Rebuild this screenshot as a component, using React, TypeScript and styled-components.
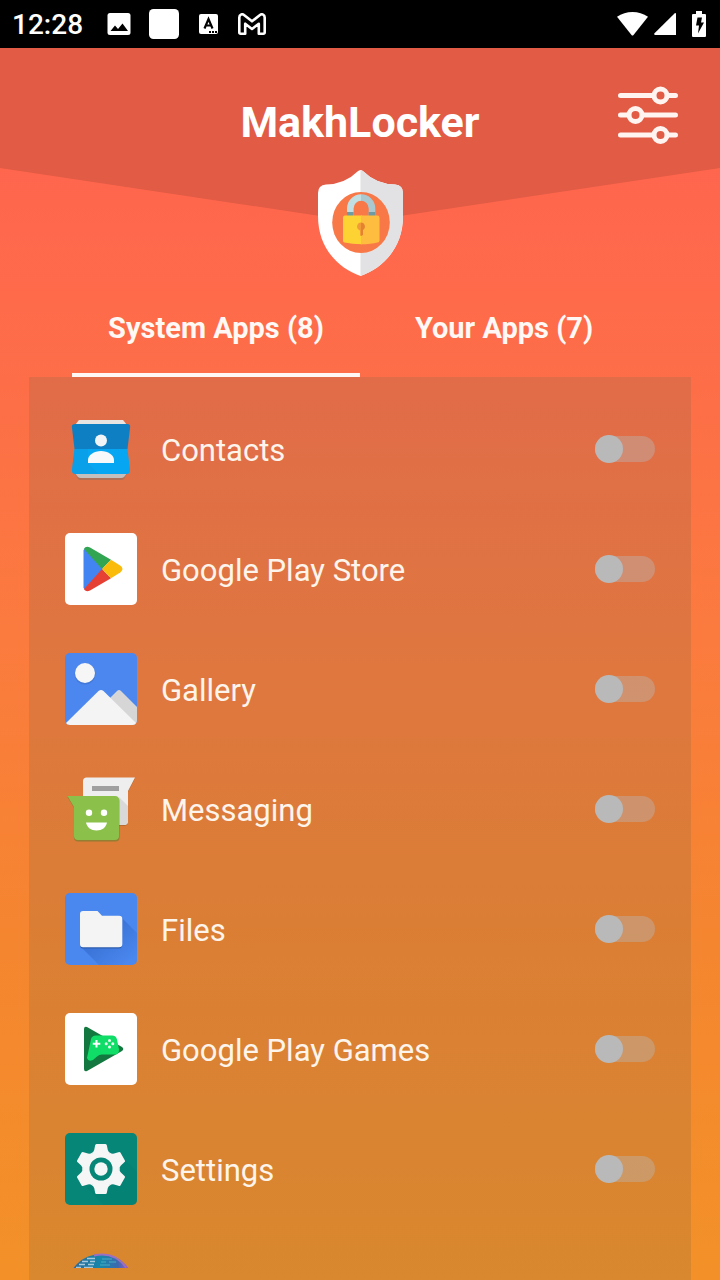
import React, { useState } from "react";
import styled, { createGlobalStyle } from "styled-components";

const GlobalStyle = createGlobalStyle`
  * { box-sizing: border-box; }
  body { margin: 0; font-family: Roboto, "Noto Sans", sans-serif; color: #fff; }
  h1, ul { margin: 0; padding: 0; }
`;

const Screen = styled.div`
  display: flex;
  flex-direction: column;
  height: 100vh;
  background: linear-gradient(#ff624f 0%, #ff674d 16%, #fd6e48 30%, #fb7b3e 50%, #f58530 72%, #f39128 100%);
`;

const StatusBar = styled.div`
  flex: none;
  display: flex;
  align-items: center;
  justify-content: space-between;
  height: 48px;
  padding: 0 14px 0 12px;
  background: #000;
`;

const StatusGroup = styled.div<{ $gap: number }>`
  display: flex;
  align-items: center;
  gap: ${(p) => p.$gap}px;
`;

const Clock = styled.time`
  font-size: 28px;
  font-weight: 500;
  line-height: 32px;
  margin-right: 6px;
  padding-top: 2px;
`;

const Header = styled.header`
  position: relative;
  flex: none;
  display: flex;
  flex-direction: column;
  align-items: center;
  gap: 24px;
  padding: 38px 42px 5px;
`;

const Fold = styled.svg`
  position: absolute;
  top: 0;
  left: 0;
  width: 100%;
  height: 174px;
`;

const TitleRow = styled.div`
  position: relative;
  display: grid;
  grid-template-columns: 1fr auto 1fr;
  align-self: stretch;
  height: 60px;
`;

const Title = styled.h1`
  grid-column: 2;
  align-self: end;
  font-size: 43px;
  font-weight: 700;
  line-height: 48px;
`;

const IconButton = styled.button`
  justify-self: end;
  align-self: start;
  display: flex;
  padding: 0;
  border: 0;
  background: none;
  cursor: pointer;
`;

const Shield = styled.svg`
  position: relative;
  display: block;
`;

const Tabs = styled.div`
  flex: none;
  display: flex;
  margin: 0 10%;
`;

const Tab = styled.button<{ $active: boolean }>`
  flex: 1;
  height: 96px;
  padding: 2px 0 0;
  border: 0;
  border-bottom: 4px solid ${(p) => (p.$active ? "#fff8f4" : "transparent")};
  background: none;
  color: #fff8f4;
  font: 700 29px/32px Roboto, "Noto Sans", sans-serif;
  cursor: pointer;
`;

const Panel = styled.main`
  flex: 1;
  min-height: 0;
  display: flex;
  margin: 0 29px;
  padding: 12px 0;
  background: rgba(115, 100, 75, 0.2);
`;

const AppList = styled.ul`
  flex: 1;
  overflow: hidden;
  list-style: none;
`;

const AppRow = styled.li`
  display: flex;
  align-items: center;
  gap: 24px;
  height: 120px;
  padding: 0 36px;
`;

const AppIcon = styled.svg`
  flex: none;
  width: 72px;
  height: 72px;
`;

const AppName = styled.label`
  flex: 1;
  padding-top: 4px;
  color: #fdf5ec;
  font-size: 31px;
  line-height: 36px;
`;

const Switch = styled.input`
  appearance: none;
  flex: none;
  display: flex;
  align-items: center;
  width: 60px;
  height: 26px;
  margin: 0;
  border-radius: 13px;
  background: rgba(185, 185, 185, 0.4);
  cursor: pointer;

  &::before {
    content: "";
    flex: none;
    width: 28px;
    height: 28px;
    border-radius: 50%;
    background: #b9b9b9;
  }

  &:checked {
    justify-content: flex-end;
  }

  &:checked::before {
    background: #fff;
  }
`;

const contacts = (
  <>
    <path d="M14 7h44l4 5H10z" fill="#e8e4e2" />
    <path d="M9 59h54l-4 7q-1 1-3 1H16q-2 0-3-1z" fill="#8d7062" opacity=".6" />
    <path d="M9 59h54l-4 5q-1 1-3 1H16q-2 0-3-1z" fill="#c4bfbd" />
    <path d="M10 11h52q4 0 3 4l-2.500 21h-53L7 15q-1-4 3-4z" fill="#0e7fc2" />
    <path d="M9.500 36h53L65 57q0 4-3 4H10q-3 0-3-4z" fill="#06a6f2" />
    <path d="M9.500 36H23v14l11 11H10q-3 0-3-4z" fill="#0c9be2" opacity=".6" />
    <circle cx="36" cy="27.500" r="6" fill="#f1f4f6" />
    <path d="M23 50v-3c0-5 6-9 13-9s13 4 13 9v3z" fill="#f6f8f9" />
  </>
);

const playStore = (
  <>
    <rect width="72" height="72" rx="5" fill="#fff" />
    <path d="M18.500 17v38l2 2L38 36 20.500 15z" fill="#4384f3" />
    <path d="M19 16c1-2 3-3 6-1.500l21 12.300L37 36z" fill="#31a552" />
    <path d="M19 56c1 2 3 3 6 1.500l21-12.300L37 36z" fill="#e54033" />
    <path d="M46 26.800l9.500 6q4 3.200 0 6.400l-9.500 6L37 36z" fill="#fbbb0a" />
  </>
);

const gallery = (
  <>
    <rect width="72" height="72" rx="5" fill="#4b87ef" />
    <circle cx="20" cy="21" r="10.500" fill="#3d6fc8" opacity=".6" />
    <circle cx="20" cy="20" r="10" fill="#f6f6f6" />
    <path d="M40 50 52 38q2-2 4 0l16 16v13q0 5-5 5z" fill="#d6d6d6" />
    <path d="M1 70 33.500 38q2.500-2 5 0L71 70q-1.500 2-4 2H5q-3 0-4-2z" fill="#f4f4f4" />
  </>
);

const messaging = (
  <>
    <path d="M21 5.500h49L63 19v30q0 4-4 4H22q-4 0-4-4V9q0-3 3-3.500z" fill="#7c552d" opacity=".4" />
    <path d="M21 4.500h49L63 18v30q0 4-4 4H22q-4 0-4-4V8q0-3 3-3.500z" fill="#eeeeee" />
    <path d="M54 24 63 33v15q0 4-4 4h-5z" fill="#d9d9d9" />
    <path d="M27 13h27v5H27z" fill="#9f9f9f" />
    <path d="M2.500 24H50q4.500 0 4.500 4v36q0 4.500-4 4.500H13q-4 0-4-4V35z" fill="#63812f" opacity=".6" />
    <path d="M2.500 23H50q4 0 4 4v36q0 4-4 4H13q-4 0-4-4V34z" fill="#8bc04b" />
    <circle cx="24" cy="39.700" r="3.200" fill="#fff" />
    <circle cx="39" cy="39.700" r="3.200" fill="#fff" />
    <path d="M21 49.500h21c-1 5-5 8-10.500 8S22 54.500 21 49.500z" fill="#fff" />
  </>
);

const files = (
  <>
    <defs>
      <linearGradient id="files-shade" x1="0" y1="0" x2="1" y2="1">
        <stop offset=".3" stopColor="#2c62c4" stopOpacity=".6" />
        <stop offset=".9" stopColor="#2c62c4" stopOpacity="0" />
      </linearGradient>
    </defs>
    <rect width="72" height="72" rx="5" fill="#4a87ee" />
    <path d="M16 54 34 72h33q5 0 5-5V40L57 25z" fill="url(#files-shade)" />
    <path d="M15 52q0 3.500 3 3.500h36q3 0 3-3.500" fill="#2c5cae" />
    <path d="M18 18h14.500l4.500 4.700h17q3.300 0 3.300 3.300v25q0 3.300-3.300 3.300H18q-3 0-3-3.300V21q0-3 3-3z" fill="#f4f4f4" />
  </>
);

const playGames = (
  <>
    <rect width="72" height="72" rx="5" fill="#fff" />
    <path d="M19 16q0-3 3-2l35 20q2.500 2 0 4L22 58q-3 1-3-2z" fill="#12783f" />
    <path d="M26 26q1-3.500 5-3.500h16q4 0 5 4l2 10q0 5-4 5H37q-3 0-5 2l-4 3.500q-5 2-6-2z" fill="#10dd68" />
    <path d="M31.500 27v7.500M27.800 30.700h7.500" stroke="#fff" strokeWidth="2" />
    <g fill="#e7ffef">
      <circle cx="44.500" cy="27.500" r="1.500" />
      <circle cx="44.500" cy="34" r="1.500" />
      <circle cx="41.200" cy="30.700" r="1.500" />
      <circle cx="47.800" cy="30.700" r="1.500" />
    </g>
  </>
);

const settings = (
  <>
    <rect width="72" height="72" rx="5" fill="#058677" />
    <path d="M22 55 39 72h28q5 0 5-5V39L55 22z" fill="#047b6d" opacity=".3" />
    <g fill="#f5f6f6">
      <circle cx="36" cy="36" r="18" />
      {[0, 60, 120, 180, 240, 300].map((angle) => (
        <path
          key={angle}
          transform={`rotate(${angle} 36 36)`}
          d="M31.500 11h9q1.200 0 1.400 1.500l.9 4.500q.5 2 3.200 3.500H26q2.700-1.500 3.200-3.500l.9-4.500q.2-1.500 1.400-1.500z"
        />
      ))}
    </g>
    <circle cx="36" cy="36" r="11.500" fill="#058677" />
    <circle cx="36" cy="36" r="6.700" fill="#f5f6f6" />
  </>
);

const globe = (
  <>
    <defs>
      <linearGradient id="globe-fill">
        <stop offset=".1" stopColor="#2b6a9b" />
        <stop offset=".5" stopColor="#1787a9" />
        <stop offset=".75" stopColor="#3e69ae" />
        <stop offset=".9" stopColor="#a558c6" />
      </linearGradient>
    </defs>
    <circle cx="36" cy="35" r="34" fill="url(#globe-fill)" />
    <path d="M29 2.500q12-2.500 21 2 7 4 11 10" fill="none" stroke="#9a70c4" strokeWidth="2" />
    <path d="M22 5.500h8M17 8.500h6m2 0h5M14 11.500h6m3 0h6M11 14.500h5m3 0h9" stroke="#a8c9dc" strokeWidth="1.400" />
    <path d="M37 6h10M36 9h5m3 0h7M35 12h10" stroke="#4bacc4" strokeWidth="1" />
  </>
);

const apps: { id: string; name?: string; icon: React.ReactNode }[] = [
  { id: "contacts", name: "Contacts", icon: contacts },
  { id: "play-store", name: "Google Play Store", icon: playStore },
  { id: "gallery", name: "Gallery", icon: gallery },
  { id: "messaging", name: "Messaging", icon: messaging },
  { id: "files", name: "Files", icon: files },
  { id: "play-games", name: "Google Play Games", icon: playGames },
  { id: "settings", name: "Settings", icon: settings },
  { id: "globe", icon: globe },
];

const tabs = ["System Apps (8)", "Your Apps (7)"];

export default function App() {
  const [active, setActive] = useState(0);
  return (
    <Screen>
      <GlobalStyle />
      <StatusBar>
        <StatusGroup $gap={18}>
          <Clock>12:28</Clock>
          <svg width="24" height="24" viewBox="0 0 24 24">
            <rect x=".5" y="1" width="23" height="22" rx="2.500" fill="#fff" />
            <path d="M3.500 19 8 13.500l3 3.500 4.500-5.500L21 19z" fill="#000" />
          </svg>
          <svg width="30" height="30" viewBox="0 0 30 30">
            <rect width="30" height="30" rx="4.500" fill="#fff" />
          </svg>
          <svg width="21" height="20" viewBox="0 0 21 20">
            <rect x="2" width="19" height="20" rx="2" fill="#fff" />
            <path d="M7.500 14.500 11.500 5l4 9.500M9 11.500h5" fill="none" stroke="#000" strokeWidth="2.200" />
            <path d="M12 18h2m1 0h2m1 0h2" stroke="#000" strokeWidth="2" />
          </svg>
          <svg width="30" height="22" viewBox="-2 0 30 22">
            <path
              d="M1.300 4.500C1.300 1.500 4 .5 6 2l8 6.300L22 2c2-1.500 4.700-.5 4.700 2.500v14.800q0 1.400-1.400 1.400h-4.500v-10L14 16l-6.800-5.300v10H2.700q-1.400 0-1.400-1.400z"
              fill="none"
              stroke="#fff"
              strokeWidth="2.600"
              strokeLinejoin="round"
            />
          </svg>
        </StatusGroup>
        <StatusGroup $gap={6}>
          <svg width="31" height="24" viewBox="0 0 31 24">
            <path d="M0 4.800C9-1.600 22-1.600 31 4.800L16.500 23q-1 1.200-2 0z" fill="#fff" />
          </svg>
          <svg width="22" height="22" viewBox="0 0 22 22">
            <path d="M22 1v21H1q-1.500-.6-.5-1.700L20.500.4Q22-.4 22 1z" fill="#fff" />
          </svg>
          <svg width="24" height="26" viewBox="0 0 24 26">
            <path d="M14 0h6v3h3q1 0 1 1v21q0 1-1 1H11q-1 0-1-1V4q0-1 1-1h3z" fill="#fff" />
            <path d="M15.500 6.500h4.500l-1 5h3L16 22.500l1-8h-3z" fill="#000" />
          </svg>
        </StatusGroup>
      </StatusBar>

      <Header>
        <Fold viewBox="0 0 720 174" preserveAspectRatio="none" aria-hidden="true">
          <path d="M0 0h720v120L400 168q-40 6-80 0L0 120z" fill="#e15b45" />
        </Fold>
        <TitleRow>
          <Title>MakhLocker</Title>
          <IconButton type="button" aria-label="Preferences">
            <svg width="60" height="58" viewBox="0 0 60 58" fill="none" stroke="#fff4f0" strokeLinecap="round" strokeWidth="5">
              <path d="M2.500 9.500H35M50 9.500h7.500M2.500 29H10M25 29h32.500M2.500 49H35M50 49h7.500" />
              <circle cx="42.500" cy="9.500" r="6.500" />
              <circle cx="17.500" cy="29" r="6.500" />
              <circle cx="42.500" cy="49" r="6.500" />
            </svg>
          </IconButton>
        </TitleRow>
        <Shield width="85" height="106" viewBox="0 0 85 106" aria-hidden="true">
          <path
            d="M42.500 0q-1.500 0-3 1.500Q27 14 8 14.500 0 15 0 23v23c0 32 20 52 42.500 60C65 98 85 78 85 46V23q0-8-8-8.500Q58 14 45.500 1.500 44 0 42.500 0z"
            fill="#fff"
          />
          <path d="M42.500 0q1.500 0 3 1.500Q58 14 77 14.500q8 .5 8 8.500v23c0 32-20 52-42.500 60z" fill="#e2e2e4" />
          <ellipse cx="43" cy="52.500" rx="28.800" ry="30.500" fill="#f87847" />
          <path d="M32.300 46v-7.500A11 11 0 0 1 43.200 27.500" fill="none" stroke="#c1dee3" strokeWidth="6.600" />
          <path d="M43 27.500a11 11 0 0 1 11 11V46" fill="none" stroke="#aac8d0" strokeWidth="6.600" />
          <path d="M29 42h6.600v5H29zM50.700 42h6.600v5h-6.600z" fill="#6f9aa2" />
          <path d="M44 45.500v28.800q-10 0-17.500-1.800-1.500 0-1.500-2V47.500q0-2 2-2z" fill="#fdd334" />
          <path d="M43 45.500v28.800q10 0 16.500-1.800 2 0 2-2V47.500q0-2-2-2z" fill="#ffbd3f" />
          <path d="M43 52.500a4 4 0 0 0-2 7.400l1 .6v5l1 .5z" fill="#f19a37" />
          <path d="M43 52.500a4 4 0 0 1 2 7.400v5L43 66z" fill="#e5822f" />
        </Shield>
      </Header>

      <Tabs role="tablist">
        {tabs.map((label, i) => (
          <Tab key={label} type="button" role="tab" aria-selected={active === i} $active={active === i} onClick={() => setActive(i)}>
            {label}
          </Tab>
        ))}
      </Tabs>

      <Panel>
        <AppList>
          {apps.map(({ id, name, icon }) => (
            <AppRow key={id}>
              <AppIcon viewBox="0 0 72 72" aria-hidden="true">{icon}</AppIcon>
              {name && (
                <>
                  <AppName htmlFor={id}>{name}</AppName>
                  <Switch id={id} type="checkbox" role="switch" />
                </>
              )}
            </AppRow>
          ))}
        </AppList>
      </Panel>
    </Screen>
  );
}
